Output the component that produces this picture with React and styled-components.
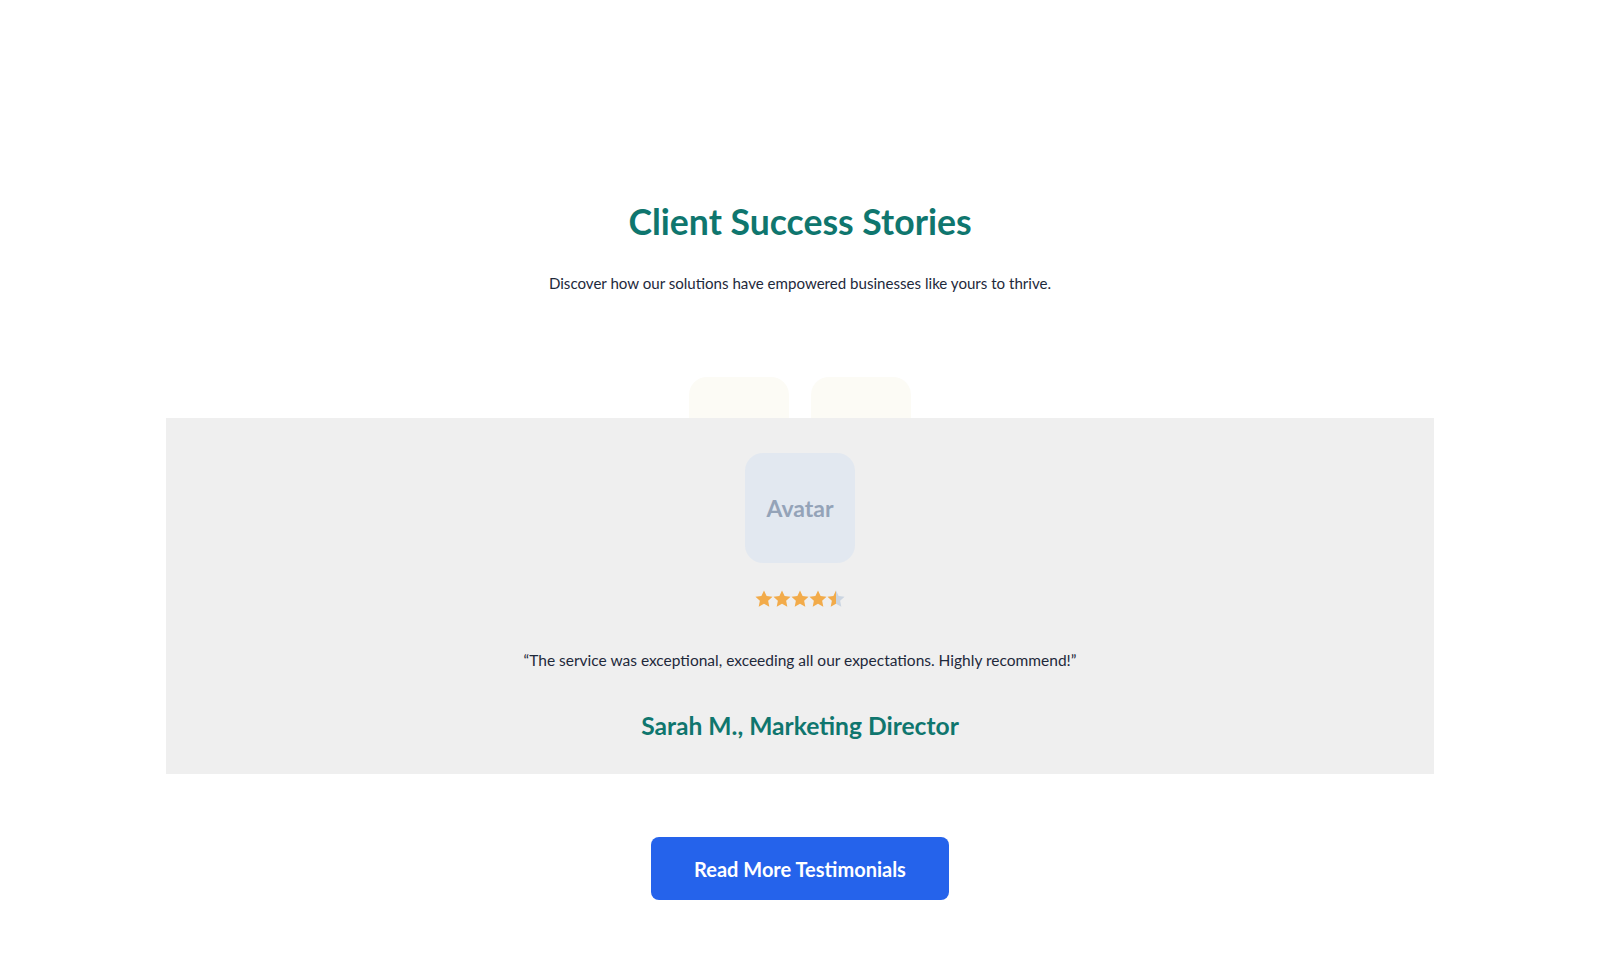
import React from 'react';
import styled, { createGlobalStyle } from 'styled-components';

const GlobalStyle = createGlobalStyle`
  * {
    box-sizing: border-box;
  }
  body {
    margin: 0;
    background: #ffffff;
    font-family: Lato, 'Noto Sans', sans-serif;
  }
`;

const Section = styled.section`
  display: flex;
  flex-direction: column;
  align-items: center;
  padding-top: 199px;
  padding-bottom: 78px;
`;

const Title = styled.h2`
  margin: 0;
  font-size: 35.6px;
  line-height: 46px;
  font-weight: 700;
  color: #0f766e;
`;

const Subtitle = styled.p`
  margin: 26px 0 0;
  font-size: 15.1px;
  line-height: 24px;
  color: #1e293b;
`;

const Tabs = styled.div`
  display: flex;
  gap: 22px;
  margin-top: 82px;
`;

const Tab = styled.div`
  width: 100px;
  height: 41px;
  border-radius: 18px 18px 0 0;
  background: #fcfbf5;
`;

const Panel = styled.div`
  width: 1268px;
  height: 356px;
  background: #efefef;
  display: flex;
  flex-direction: column;
  align-items: center;
  padding-top: 35px;
`;

const Avatar = styled.div`
  width: 110px;
  height: 110px;
  border-radius: 18px;
  background: #e2e8f0;
  color: #94a3b8;
  display: flex;
  align-items: center;
  justify-content: center;
  font-family: Lato, sans-serif;
  font-weight: 700;
  font-size: 23px;
`;

const Stars = styled.div`
  display: flex;
  margin-top: 27px;
`;

const Quote = styled.p`
  margin: 40px 0 0;
  font-size: 15.5px;
  line-height: 24px;
  color: #1e293b;
`;

const Name = styled.h3`
  margin: 38px 0 0;
  font-size: 24.6px;
  line-height: 32px;
  font-weight: 700;
  color: #0f766e;
`;

const Button = styled.button`
  margin-top: 63px;
  width: 298px;
  height: 63px;
  border: none;
  border-radius: 8px;
  background: #2563eb;
  color: #ffffff;
  font-family: Lato, 'Noto Sans', sans-serif;
  font-size: 20px;
  font-weight: 700;
  cursor: pointer;
`;

const STAR = 'M12 2.5l2.9 6.1 6.6.8-4.9 4.6 1.3 6.6L12 17.3l-5.9 3.3 1.3-6.6-4.9-4.6 6.6-.8z';

const Star = ({ fill }) => {
  const id = `half-${fill}`;
  return (
    <svg width="18" height="18" viewBox="2 2 20 20">
      <defs>
        <linearGradient id={id}>
          <stop offset={`${fill * 100}%`} stopColor="#f2ab4a" />
          <stop offset={`${fill * 100}%`} stopColor="#cbd5e1" />
        </linearGradient>
      </defs>
      <path d={STAR} fill={`url(#${id})`} />
    </svg>
  );
};

const App = () => {
  const rating = [1, 1, 1, 1, 0.5];
  return (
    <>
      <GlobalStyle />
      <Section>
        <Title>Client Success Stories</Title>
        <Subtitle>Discover how our solutions have empowered businesses like yours to thrive.</Subtitle>
        <Tabs>
          <Tab />
          <Tab />
        </Tabs>
        <Panel>
          <Avatar>Avatar</Avatar>
          <Stars>
            {rating.map((r, i) => (
              <Star key={i} fill={r} />
            ))}
          </Stars>
          <Quote>“The service was exceptional, exceeding all our expectations. Highly recommend!”</Quote>
          <Name>Sarah M., Marketing Director</Name>
        </Panel>
        <Button>Read More Testimonials</Button>
      </Section>
    </>
  );
};

export default App;
